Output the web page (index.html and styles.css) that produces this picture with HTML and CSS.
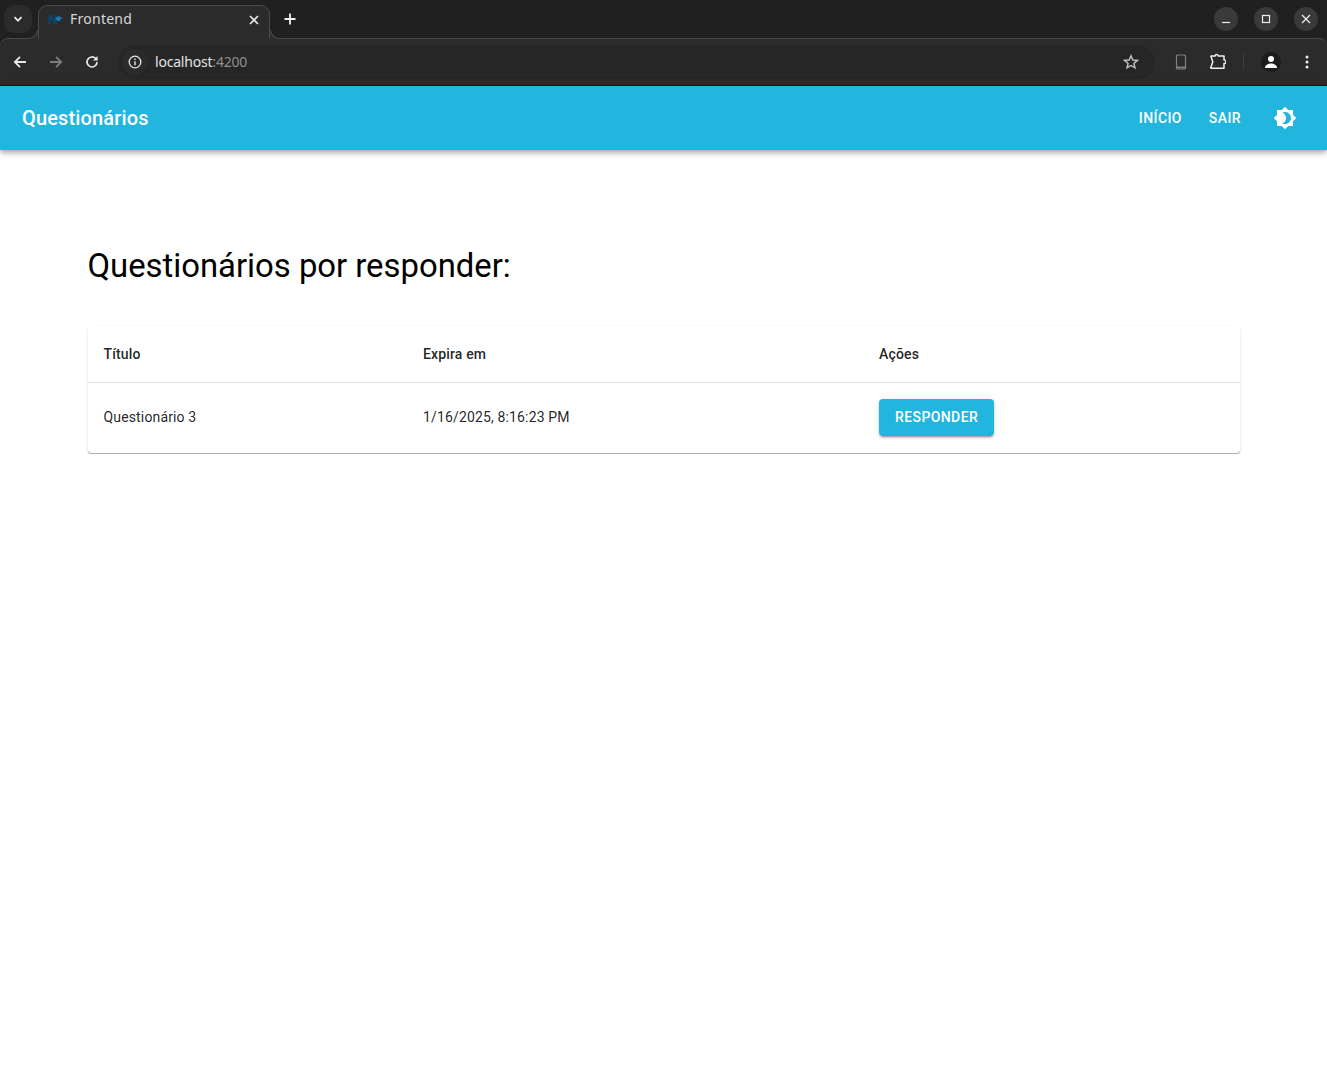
FILE: index.html
```html
<!DOCTYPE html>
<html lang="pt">
<head>
    <meta charset="UTF-8">
    <meta name="viewport" content="width=device-width, initial-scale=1.0">
    <title>Frontend</title>
    <link rel="stylesheet" href="styles.css">
</head>
<body>
    <div class="browser-chrome">
        <div class="tabstrip">
            <div class="tab-search">
                <svg width="12" height="12" viewBox="0 0 12 12"><path d="M2.500 4.200 6 7.700l3.500-3.500" fill="none" stroke="#e8e8e8" stroke-width="1.800"/></svg>
            </div>
            <div class="tab">
                <svg class="favicon" width="16" height="16" viewBox="0 0 16 16">
                    <path d="M0.500 3h3l3 4.500V3h2.500v9.500H6.500L3 7.500v5H0.500z" fill="#0c4468"/>
                    <path d="M7 6.500l3.500-2.500 4.500 2.500-2.500.5-1 2.500-2.500-1z" fill="#1b7cb4"/>
                </svg>
                <span class="tab-title">Frontend</span>
                <svg class="tab-close" width="10" height="10" viewBox="0 0 10 10"><path d="M1 1l8 8M9 1 1 9" stroke="#e8e8e8" stroke-width="1.600"/></svg>
            </div>
            <svg class="new-tab" width="12" height="12" viewBox="0 0 12 12"><path d="M6 .5v11M.5 6h11" stroke="#f0f0f0" stroke-width="1.800"/></svg>
            <div class="window-controls">
                <div class="win-btn"><svg width="10" height="10" viewBox="0 0 10 10"><path d="M1 8.500h8" stroke="#eee" stroke-width="1.200"/></svg></div>
                <div class="win-btn"><svg width="10" height="10" viewBox="0 0 10 10"><rect x="1.500" y="1.500" width="7" height="7" fill="none" stroke="#eee" stroke-width="1.200"/></svg></div>
                <div class="win-btn"><svg width="10" height="10" viewBox="0 0 10 10"><path d="M1 1l8 8M9 1 1 9" stroke="#eee" stroke-width="1.200"/></svg></div>
            </div>
        </div>

        <div class="browser-toolbar">
            <svg class="nav-icon" width="16" height="16" viewBox="0 0 16 16"><path d="M14 8H3M8 2.800 2.800 8 8 13.200" fill="none" stroke="#e6e6e6" stroke-width="1.800"/></svg>
            <svg class="nav-icon" width="16" height="16" viewBox="0 0 16 16"><path d="M2 8h11M8 2.800 13.200 8 8 13.200" fill="none" stroke="#7d7d7d" stroke-width="1.800"/></svg>
            <svg class="nav-icon" width="16" height="16" viewBox="0 0 16 16"><path d="M13 8a5 5 0 1 1-1.500-3.600L13 6" fill="none" stroke="#e6e6e6" stroke-width="1.700"/><path d="M13.600 2v4.600H9z" fill="#e6e6e6"/></svg>
            <div class="omnibox">
                <div class="site-info">
                    <svg width="14" height="14" viewBox="0 0 14 14"><circle cx="7" cy="7" r="5.800" fill="none" stroke="#e6e6e6" stroke-width="1.300"/><path d="M7 6.200v4M7 3.600v1.400" stroke="#e6e6e6" stroke-width="1.400"/></svg>
                </div>
                <span class="url">localhost<span class="url-port">:4200</span></span>
                <svg class="star" width="16" height="16" viewBox="0 0 16 16"><path d="M8 1.800l1.800 4.200 4.600.4-3.500 3 1.100 4.500L8 11.500l-4 2.400 1.100-4.500-3.500-3 4.600-.4z" fill="none" stroke="#c4c4c4" stroke-width="1.400"/></svg>
            </div>
            <svg class="tool-phone" width="12" height="16" viewBox="0 0 12 16"><rect x="1.500" y="1" width="9" height="14" rx="1" fill="none" stroke="#808080" stroke-width="1.200"/><path d="M1.500 13.400h9" stroke="#808080" stroke-width="1.800"/></svg>
            <svg class="tool-ext" width="18" height="18" viewBox="0 0 18 18"><path d="M3 3h4.200a1.500 1.500 0 0 1 3 0H16v4h.300a1.700 1.700 0 0 1 0 3.400H16v4.900H3.200c-.4 0-.6-.3-.5-.6L4.800 9 3 3.600c-.1-.3 0-.6 0-.6z" fill="none" stroke="#f0f0f0" stroke-width="1.500" stroke-linejoin="round"/></svg>
            <span class="tool-sep"></span>
            <div class="avatar">
                <svg width="14" height="14" viewBox="0 0 14 14"><circle cx="7" cy="4" r="3" fill="#fff"/><path d="M1 13c0-3 3-4.500 6-4.500s6 1.500 6 4.500z" fill="#fff"/></svg>
            </div>
            <svg class="tool-menu" width="4" height="14" viewBox="0 0 4 14"><circle cx="2" cy="2" r="1.500" fill="#eee"/><circle cx="2" cy="7" r="1.500" fill="#eee"/><circle cx="2" cy="12" r="1.500" fill="#eee"/></svg>
        </div>
    </div>

    <header class="app-bar">
        <span class="app-title">Questionários</span>
        <nav class="app-nav">
            <a class="app-link">INÍCIO</a>
            <a class="app-link">SAIR</a>
            <svg class="theme-icon" width="24" height="24" viewBox="0 0 24 24"><path fill="#fff" d="M20 8.690V4h-4.690L12 .690 8.690 4H4v4.690L.690 12 4 15.310V20h4.690L12 23.310 15.310 20H20v-4.690L23.310 12 20 8.690zM12 18c-.890 0-1.740-.200-2.500-.550C11.560 16.500 13 14.420 13 12s-1.440-4.500-3.500-5.450C10.260 6.200 11.110 6 12 6c3.310 0 6 2.690 6 6s-2.690 6-6 6z"/></svg>
        </nav>
    </header>

    <main class="content">
        <h1 class="page-title">Questionários por responder:</h1>
        <div class="table-card">
            <table class="quiz-table">
                <thead>
                    <tr>
                        <th class="col-title">Título</th>
                        <th class="col-expires">Expira em</th>
                        <th>Ações</th>
                    </tr>
                </thead>
                <tbody>
                    <tr>
                        <td>Questionário 3</td>
                        <td>1/16/2025, 8:16:23 PM</td>
                        <td><button class="answer-btn">RESPONDER</button></td>
                    </tr>
                </tbody>
            </table>
        </div>
    </main>
</body>
</html>
```

FILE: styles.css
```css
body {
    margin: 0;
    background: #fff;
    font-family: Roboto, sans-serif;
    color: rgba(0, 0, 0, 0.87);
}

/* browser chrome */
.browser-chrome {
    background: #202020;
}
.tabstrip {
    display: flex;
    align-items: flex-end;
    height: 38px;
}
.tab-search {
    display: flex;
    align-items: center;
    justify-content: center;
    align-self: flex-start;
    width: 28px;
    height: 28px;
    margin: 5px 0 0 4px;
    border-radius: 10px;
    background: #2b2b2b;
}
.tab {
    position: relative;
    z-index: 1;
    display: flex;
    align-items: center;
    box-sizing: border-box;
    width: 232px;
    height: 34px;
    margin: 0 0 -1px 6px;
    padding: 0 10px 6px 9px;
    border: 1px solid #4a4a4a;
    border-bottom: 0;
    border-radius: 9px 9px 0 0;
    background: #2b2b2b;
}
.tab::before,
.tab::after {
    content: "";
    position: absolute;
    bottom: 0;
    width: 9px;
    height: 9px;
}
.tab::before {
    left: -10px;
    background: radial-gradient(circle at 0 0, #202020 7.500px, #4a4a4a 8px, #4a4a4a 8.500px, #2b2b2b 9px);
}
.tab::after {
    right: -10px;
    background: radial-gradient(circle at 100% 0, #202020 7.500px, #4a4a4a 8px, #4a4a4a 8.500px, #2b2b2b 9px);
}
.favicon {
    flex: none;
}
.tab-title {
    flex: 1;
    margin-left: 6px;
    padding-bottom: 2px;
    font-family: "Noto Sans", sans-serif;
    font-size: 14px;
    letter-spacing: 0.25px;
    color: #d8d8d8;
}
.new-tab {
    align-self: flex-start;
    margin: 13px 0 0 14px;
}
.window-controls {
    display: flex;
    gap: 16px;
    align-self: flex-start;
    margin: 7px 9px 0 auto;
}
.win-btn {
    display: flex;
    align-items: center;
    justify-content: center;
    width: 24px;
    height: 24px;
    border-radius: 50%;
    background: #3a3a3a;
}
.browser-toolbar {
    display: flex;
    align-items: center;
    box-sizing: border-box;
    height: 48px;
    padding: 0 18px 0 12px;
    border-top: 1px solid #4a4a4a;
    border-bottom: 1px solid #1a1a1a;
    border-radius: 8px 8px 0 0;
    background: #2b2b2b;
}
.nav-icon {
    flex: none;
    margin-right: 20px;
}
.nav-icon:nth-child(3) {
    margin-right: 18px;
}
.omnibox {
    display: flex;
    align-items: center;
    flex: 1;
    height: 34px;
    padding-right: 16px;
    border-radius: 17px;
    background: #262626;
}
.site-info {
    display: flex;
    align-items: center;
    justify-content: center;
    width: 26px;
    height: 26px;
    margin-left: 4px;
    border-radius: 50%;
    background: #2b2b2b;
}
.url {
    flex: 1;
    margin-left: 7px;
    padding-bottom: 2px;
    font-family: "Noto Sans", sans-serif;
    font-size: 14px;
    letter-spacing: -0.2px;
    color: #e3e3e3;
}
.url-port {
    color: #8f8f8f;
}
.tool-phone {
    margin-left: 20px;
}
.tool-ext {
    margin-left: 21px;
}
.tool-sep {
    width: 1px;
    height: 16px;
    margin: 0 17px;
    background: #3d3d3d;
}
.avatar {
    display: flex;
    align-items: center;
    justify-content: center;
    width: 20px;
    height: 20px;
    border-radius: 50%;
    background: #1c1c1c;
}
.tool-menu {
    margin-left: 24px;
}

/* app */
.app-bar {
    position: relative;
    display: flex;
    align-items: center;
    justify-content: space-between;
    height: 64px;
    padding: 0 30px 0 22px;
    background: #22b5dd;
    color: #fff;
    box-shadow: 0 2px 4px -1px rgba(0, 0, 0, 0.2), 0 4px 5px rgba(0, 0, 0, 0.14), 0 1px 10px rgba(0, 0, 0, 0.12);
}
.app-title {
    font-size: 20px;
    font-weight: 500;
    letter-spacing: 0.15px;
}
.app-nav {
    display: flex;
    align-items: center;
}
.app-link {
    margin-right: 27px;
    font-size: 14px;
    font-weight: 500;
    letter-spacing: 0.4px;
}
.theme-icon {
    margin-left: 5px;
}
.content {
    padding: 93px 87px 0 87.500px;
}
.page-title {
    margin: 0 0 37px;
    font-size: 32.850px;
    font-weight: 400;
    line-height: 46px;
    color: #000;
}
.table-card {
    margin-left: .5px;
    border-bottom: 1px solid #adadad;
    border-radius: 4px;
    box-shadow: 0 1px 1px rgba(0, 0, 0, 0.14), 0 1px 3px rgba(0, 0, 0, 0.12);
}
.quiz-table {
    width: 100%;
    border-collapse: collapse;
    font-size: 14px;
    letter-spacing: 0.15px;
    text-align: left;
}
.quiz-table th {
    height: 56px;
    padding: 0 15.500px;
    border-bottom: 1px solid #e0e0e0;
    font-weight: 500;
}
.quiz-table td {
    height: 68px;
    padding: 0 15.500px 2px;
}
.col-title {
    width: 288.500px;
}
.col-expires {
    width: 425px;
}
.answer-btn {
    height: 37px;
    margin-top: 1px;
    padding: 0 16px 2px;
    border: 0;
    border-radius: 4px;
    background: #22b5dd;
    color: #fff;
    font-family: Roboto, sans-serif;
    font-size: 14px;
    font-weight: 500;
    letter-spacing: 0.4px;
    box-shadow: 0 3px 1px -2px rgba(0, 0, 0, 0.2), 0 2px 2px rgba(0, 0, 0, 0.14), 0 1px 5px rgba(0, 0, 0, 0.12);
}
```
